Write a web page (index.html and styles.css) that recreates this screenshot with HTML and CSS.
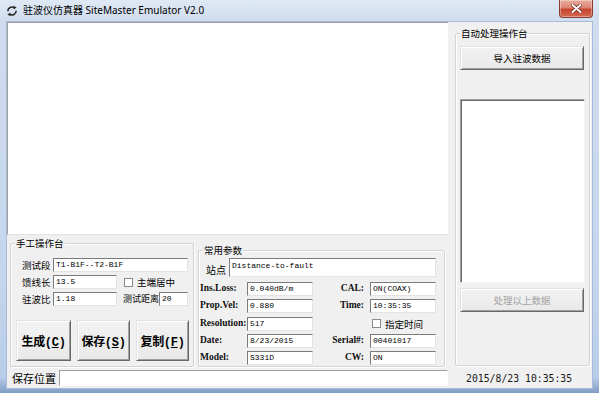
FILE: index.html
```html
<!DOCTYPE html>
<html>
<head>
<meta charset="utf-8">
<title>驻波仪仿真器</title>
<link rel="stylesheet" href="styles.css">
</head>
<body>
<div class="window">
  <div class="titlebar">
    <svg class="app-icon" width="12" height="12" viewBox="0 0 12 12">
      <path d="M1.8 6.2a4.2 4.2 0 0 1 6.6-3.4" stroke="#2a2a2a" stroke-width="1.6" fill="none"/>
      <path d="M10.2 5.8a4.2 4.2 0 0 1-6.6 3.4" stroke="#2a2a2a" stroke-width="1.6" fill="none"/>
      <path d="M7.6 0.8l3 1.6-3 2z" fill="#2a2a2a"/>
      <path d="M4.4 11.2l-3-1.6 3-2z" fill="#2a2a2a"/>
    </svg>
    <span class="title">驻波仪仿真器 SiteMaster Emulator V2.0</span>
    <div class="close">
      <svg width="11" height="9" viewBox="0 0 11 9">
        <path d="M1.5 1l8 7M9.5 1l-8 7" stroke="#6b2218" stroke-width="3.4" stroke-linecap="round"/>
        <path d="M1.5 1l8 7M9.5 1l-8 7" stroke="#ffffff" stroke-width="2" stroke-linecap="round"/>
      </svg>
    </div>
  </div>
  <div class="client">
    <div class="main">
      <div class="leftcol">
        <div class="canvas"></div>
        <div class="bottomrow">
          <div class="group manual">
            <span class="legend">手工操作台</span>
            <div class="row"><span class="lbl">测试段</span><span class="field w135">T1-B1F--T2-B1F</span></div>
            <div class="row"><span class="lbl">馈线长</span><span class="field w64">13.5</span><span class="check chk-a"></span><span class="clbl">主端居中</span></div>
            <div class="row"><span class="lbl">驻波比</span><span class="field w64">1.18</span><span class="lbl2">测试距离</span><span class="field w29">20</span></div>
            <div class="bigbtns">
              <button class="btn big b55">生成(<u>C</u>)</button>
              <button class="btn big b53">保存(<u>S</u>)</button>
              <button class="btn big b53">复制(<u>F</u>)</button>
            </div>
          </div>
          <div class="group params">
            <span class="legend">常用参数</span>
            <div class="site"><span class="sitelbl">站点</span><span class="field site-field">Distance-to-fault</span></div>
            <div class="pgrid">
              <span class="plbl">Ins.Loss:</span><span class="field">0.040dB/m</span><span class="plbl r">CAL:</span><span class="field">ON(COAX)</span>
              <span class="plbl">Prop.Vel:</span><span class="field">0.880</span><span class="plbl r">Time:</span><span class="field">10:35:35</span>
              <span class="plbl">Resolution:</span><span class="field">517</span><span></span><span class="chkrow"><span class="check"></span><span class="clbl">指定时间</span></span>
              <span class="plbl">Date:</span><span class="field">8/23/2015</span><span class="plbl r">Serial#:</span><span class="field">00401017</span>
              <span class="plbl">Model:</span><span class="field">S331D</span><span class="plbl r">CW:</span><span class="field">ON</span>
            </div>
          </div>
        </div>
      </div>
      <div class="rightcol">
        <div class="group auto">
          <span class="legend">自动处理操作台</span>
          <button class="btn wide">导入驻波数据</button>
          <div class="listbox"></div>
          <button class="btn wide btn2" disabled>处理以上数据</button>
        </div>
      </div>
    </div>
    <div class="status">
      <span class="slbl">保存位置</span>
      <span class="sfield"></span>
      <span class="sdate">2015/8/23 10:35:35</span>
    </div>
  </div>
</div>
</body>
</html>
```

FILE: styles.css
```css
* { box-sizing: border-box; margin: 0; padding: 0; }
html, body { width: 599px; height: 393px; overflow: hidden; }
body {
  background: #c8d8ed;
  font-family: "Noto Sans CJK SC", sans-serif;
  color: #000;
}
.window {
  width: 599px;
  height: 393px;
  display: flex;
  flex-direction: column;
  background: linear-gradient(180deg, #dfe9f5 0, #cfdcef 22px, #c5d6ec 70%, #b9cde8 96%, #7f9cc4 100%);
}
.titlebar {
  height: 22px;
  display: flex;
  align-items: flex-start;
  padding-left: 6px;
}
.app-icon { margin-top: 5px; flex: none; }
.title {
  margin-left: 5px;
  line-height: 21px;
  font-family: "Noto Sans", "Noto Sans CJK SC", sans-serif;
  font-size: 10px;
  color: #000;
  white-space: nowrap;
}
.close {
  margin-left: auto;
  margin-right: 6px;
  width: 34px;
  height: 18px;
  border: 1px solid #8b3b2f;
  border-top: none;
  border-radius: 0 0 4px 4px;
  background: linear-gradient(180deg, #e9ab9c 0, #dc8674 45%, #c7452f 55%, #d4684f 100%);
  display: flex;
  align-items: center;
  justify-content: center;
  box-shadow: inset 0 0 0 1px rgba(255,255,255,0.35);
}
.client {
  margin: 0 7px;
  height: 366px;
  background: #f0f0f0;
  display: flex;
  flex-direction: column;
  box-shadow: 0 0 0 1px #a7bcd8;
}
.main { height: 346px; display: flex; }
.leftcol { width: 441px; flex: none; }
.canvas {
  height: 213px;
  background: #fff;
  border-left: 1px solid #a0a0a0;
  border-top: 1px solid #a0a0a0;
  border-bottom: 1px solid #e3e3e3;
}
.bottomrow { display: flex; align-items: flex-start; }
.group {
  position: relative;
  border: 1px solid #d3d3d3;
  border-radius: 2px;
  box-shadow: inset 1px 1px 0 #fff, 1px 1px 0 #fff;
  flex: none;
}
.legend {
  position: absolute;
  top: -7px;
  left: 4px;
  padding: 0 1px;
  background: #f0f0f0;
  font-size: 9.5px;
  line-height: 12px;
  white-space: nowrap;
}
.manual {
  margin: 8px 0 0 3px;
  width: 184px;
  height: 124px;
  padding: 14px 0 0 11px;
}
.row { display: flex; align-items: center; height: 14px; margin-bottom: 3px; }
.lbl { width: 31px; font-size: 9.5px; line-height: 14px; white-space: nowrap; }
.lbl2 { margin-left: 6px; width: 36px; font-size: 9px; line-height: 14px; white-space: nowrap; }
.field {
  display: block;
  height: 14px;
  background: #fff;
  border: 1px solid;
  border-color: #7a7a7a #e3e3e3 #e3e3e3 #7a7a7a;
  font-family: "Liberation Mono", monospace;
  font-size: 8px;
  line-height: 12px;
  padding-left: 2px;
  white-space: nowrap;
  overflow: hidden;
  color: #000;
}
.w135 { width: 135px; }
.w64 { width: 64px; }
.w29 { width: 29px; }
.check {
  display: block;
  width: 9px;
  height: 9px;
  border: 1px solid #8a8a8a;
  background: #fff;
  flex: none;
}
.chk-a { margin-left: 7px; }
.clbl { margin-left: 4px; font-size: 9.5px; line-height: 14px; white-space: nowrap; }
.bigbtns { display: flex; gap: 6px; margin: 14px 0 0 -6px; }
.btn {
  border: 1px solid;
  border-color: #e3e3e3 #696969 #696969 #e3e3e3;
  box-shadow: inset 1px 1px 0 #fff, inset -1px -1px 0 #a0a0a0;
  background: linear-gradient(180deg, #f2f2f2, #e9e9e9);
  font-family: "Noto Sans CJK SC", sans-serif;
  color: #000;
}
.big {
  height: 41px;
  font-family: "Liberation Mono", "Noto Sans CJK SC", monospace;
  font-size: 12px;
  font-weight: bold;
  letter-spacing: -0.3px;
}
.b55 { width: 55px; }
.b53 { width: 53px; }
.params {
  margin: 15px 0 0 4px;
  width: 247px;
  height: 117px;
  padding: 7px 0 0 1px;
}
.site { display: flex; align-items: center; height: 19px; padding-left: 6px; }
.sitelbl { width: 23px; font-size: 10px; line-height: 19px; padding-top: 3px; }
.site-field { width: 207px; height: 19px; padding-top: 1px; }
.pgrid {
  margin-top: 5px;
  display: grid;
  grid-template-columns: 47px 66px 57px 66px;
  grid-auto-rows: 14px;
  row-gap: 3.25px;
}
.plbl {
  font-family: "Liberation Serif", serif;
  font-weight: bold;
  font-size: 9.5px;
  line-height: 13px;
  white-space: nowrap;
  color: #111;
}
.plbl.r { text-align: right; padding-right: 6px; }
.chkrow { display: flex; align-items: center; padding-left: 2px; }
.rightcol { flex: none; }
.auto {
  margin: 11px 0 0 7px;
  width: 135px;
  height: 333px;
  padding: 12px 0 0 4px;
}
.wide { display: block; width: 124px; height: 24px; font-size: 9.5px; }
.btn2 { margin-top: 5px; color: #a3a3a3; }
.listbox {
  margin-top: 29px;
  width: 125px;
  height: 184px;
  background: #fff;
  border: 1px solid;
  border-color: #a0a0a0 #f4f4f4 #f4f4f4 #a0a0a0;
  box-shadow: inset 1px 1px 0 #696969;
}
.status { height: 20px; display: flex; align-items: center; }
.slbl { margin-left: 5px; width: 47px; font-size: 11px; line-height: 16px; white-space: nowrap; }
.sfield {
  display: block;
  width: 389px;
  height: 16px;
  background: #fff;
  border: 1px solid;
  border-color: #a0a0a0 #ffffff #ffffff #a0a0a0;
}
.sdate {
  margin-left: 18px;
  font-family: "DejaVu Sans Mono", monospace;
  font-size: 9.8px;
  color: #1a1a1a;
  white-space: nowrap;
}
```
